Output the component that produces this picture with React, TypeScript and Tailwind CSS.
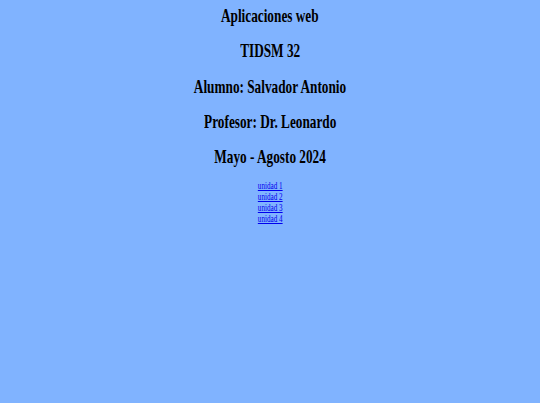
const headings = [
  'Aplicaciones web',
  'TIDSM 32',
  'Alumno: Salvador Antonio',
  'Profesor: Dr. Leonardo',
  'Mayo - Agosto 2024',
];

const units = ['unidad 1', 'unidad 2', 'unidad 3', 'unidad 4'];

export default function App() {
  return (
    <div className="min-h-screen w-full bg-[#80b3ff] font-['Liberation_Serif',serif] text-black">
      <div className="flex flex-col items-center -mt-[2px]">
        {headings.map((h) => (
          <h2
            key={h}
            className="h-[35.25px] text-[19.5px] leading-[35.25px] font-bold whitespace-nowrap scale-x-[0.68]"
          >
            {h}
          </h2>
        ))}
        <div className="mt-[6px] flex flex-col items-center">
          {units.map((u) => (
            <a
              key={u}
              href="#"
              className="h-[11px] text-[10.5px] leading-[11px] text-[#0000ee] underline whitespace-nowrap scale-x-[0.68]"
            >
              {u}
            </a>
          ))}
        </div>
      </div>
    </div>
  );
}
